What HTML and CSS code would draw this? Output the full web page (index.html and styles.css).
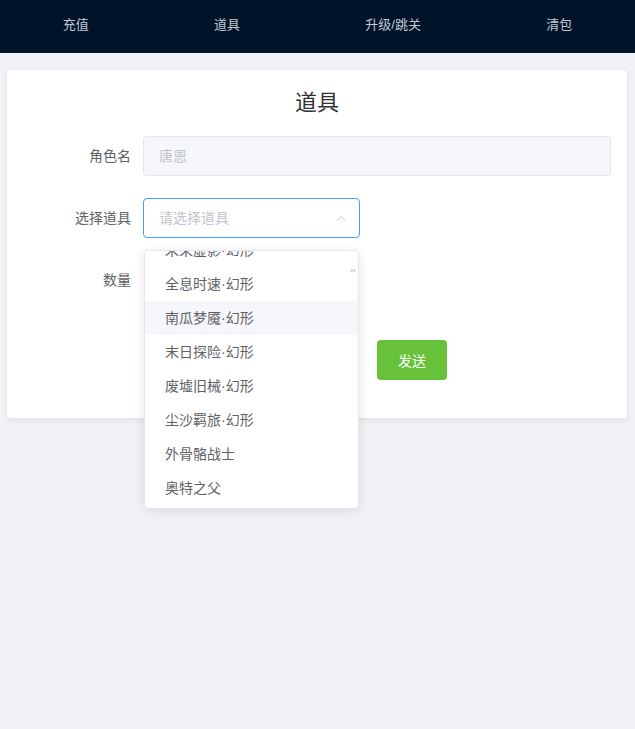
FILE: index.html
```html
<!DOCTYPE html>
<html lang="zh-CN">
<head>
<meta charset="utf-8">
<title>道具</title>
<link rel="stylesheet" href="styles.css">
</head>
<body>
<header class="nav">
  <a class="nav-item">充值</a>
  <a class="nav-item">道具</a>
  <a class="nav-item">升级/跳关</a>
  <a class="nav-item">清包</a>
</header>
<main class="page">
  <section class="card">
    <h1 class="title">道具</h1>
    <form class="form">
      <div class="form-item">
        <label class="label">角色名</label>
        <div class="content">
          <div class="input disabled">唐恩</div>
        </div>
      </div>
      <div class="form-item">
        <label class="label">选择道具</label>
        <div class="content">
          <div class="select">
            <div class="input focused">
              <span class="placeholder">请选择道具</span>
              <svg class="arrow" width="10" height="6" viewBox="0 0 10 6"><path d="M1 5.5 L5 1.5 L9 5.5" fill="none" stroke="#c0c4cc" stroke-width="1"/></svg>
            </div>
            <div class="dropdown">
              <div class="dropdown-wrap">
                <ul class="options">
                  <li class="option">未来虚影·幻形</li>
                  <li class="option">全息时速·幻形</li>
                  <li class="option hover">南瓜梦魇·幻形</li>
                  <li class="option">末日探险·幻形</li>
                  <li class="option">废墟旧械·幻形</li>
                  <li class="option">尘沙羁旅·幻形</li>
                  <li class="option">外骨骼战士</li>
                  <li class="option">奥特之父</li>
                </ul>
              </div>
              <span class="thumb"></span>
            </div>
          </div>
        </div>
      </div>
      <div class="form-item">
        <label class="label">数量</label>
        <div class="content">
          <div class="input number"></div>
        </div>
      </div>
      <div class="form-item button-row">
        <div class="content centered">
          <button type="button" class="btn-success">发送</button>
        </div>
      </div>
    </form>
  </section>
</main>
</body>
</html>
```

FILE: styles.css
```css
* { box-sizing: border-box; }
html, body { margin: 0; padding: 0; }
body {
  background: #f0f2f5;
  font-family: "Liberation Sans", "Noto Sans CJK SC", sans-serif;
  font-size: 14px;
  color: #606266;
  height: 729px;
}
.nav {
  height: 53px;
  background: #001429;
  display: flex;
  justify-content: space-around;
  align-items: center;
}
.nav-item {
  color: #c3c8d0;
  font-size: 13px;
  line-height: 20px;
  padding-bottom: 3px;
}
.page { padding: 17px 8px 0 7px; }
.card {
  background: #fff;
  border-radius: 4px;
  box-shadow: 0 2px 6px rgba(0,0,0,0.08);
  padding: 17px 16px 16px 16px;
}
.title {
  margin: 0 0 17px 0;
  text-align: center;
  font-size: 22px;
  line-height: 32px;
  font-weight: 400;
  color: #303133;
}
.form-item {
  display: flex;
  margin-bottom: 22px;
}
.label {
  width: 120px;
  flex: none;
  text-align: right;
  padding-right: 12px;
  line-height: 40px;
  color: #606266;
  font-size: 14px;
}
.content { flex: 1; min-width: 0; }
.input {
  height: 40px;
  line-height: 38px;
  border: 1px solid #dcdfe6;
  border-radius: 4px;
  padding: 0 15px;
  font-size: 14px;
  background: #fff;
}
.input.disabled {
  background: #f5f7fa;
  border-color: #e4e7ed;
  color: #c0c4cc;
}
.select { position: relative; width: 217px; }
.input.focused {
  border-color: #409eff;
  display: flex;
  justify-content: space-between;
  align-items: center;
}
.placeholder { color: #c0c4cc; }
.arrow { margin-right: -2px; }
.input.number { width: 180px; border-color: #fff; }
.dropdown {
  position: absolute;
  top: 52px;
  left: 1px;
  width: 215px;
  background: #fff;
  border: 1px solid #e4e7ed;
  border-radius: 4px;
  box-shadow: 0 2px 12px rgba(0,0,0,0.1);
  z-index: 10;
  padding: 0 0 3px 0;
}
.dropdown-wrap {
  height: 254px;
  overflow: hidden;
}
.options {
  list-style: none;
  margin: -18px 0 0 0;
  padding: 0;
}
.option {
  height: 34px;
  line-height: 34px;
  padding: 0 20px;
  font-size: 14px;
  color: #606266;
  white-space: nowrap;
}
.option.hover { background: #f5f7fa; }
.thumb {
  position: absolute;
  right: 2px;
  top: 18px;
  width: 6px;
  height: 3px;
  border-radius: 2px;
  background: rgba(144,147,153,0.3);
}
.button-row { margin-top: 40px; }
.content.centered { padding-left: 354px; }
.btn-success {
  width: 70px;
  height: 40px;
  border: none;
  border-radius: 4px;
  background: #67c23a;
  color: #fff;
  font-family: inherit;
  font-size: 14px;
  padding: 0;
}
```
